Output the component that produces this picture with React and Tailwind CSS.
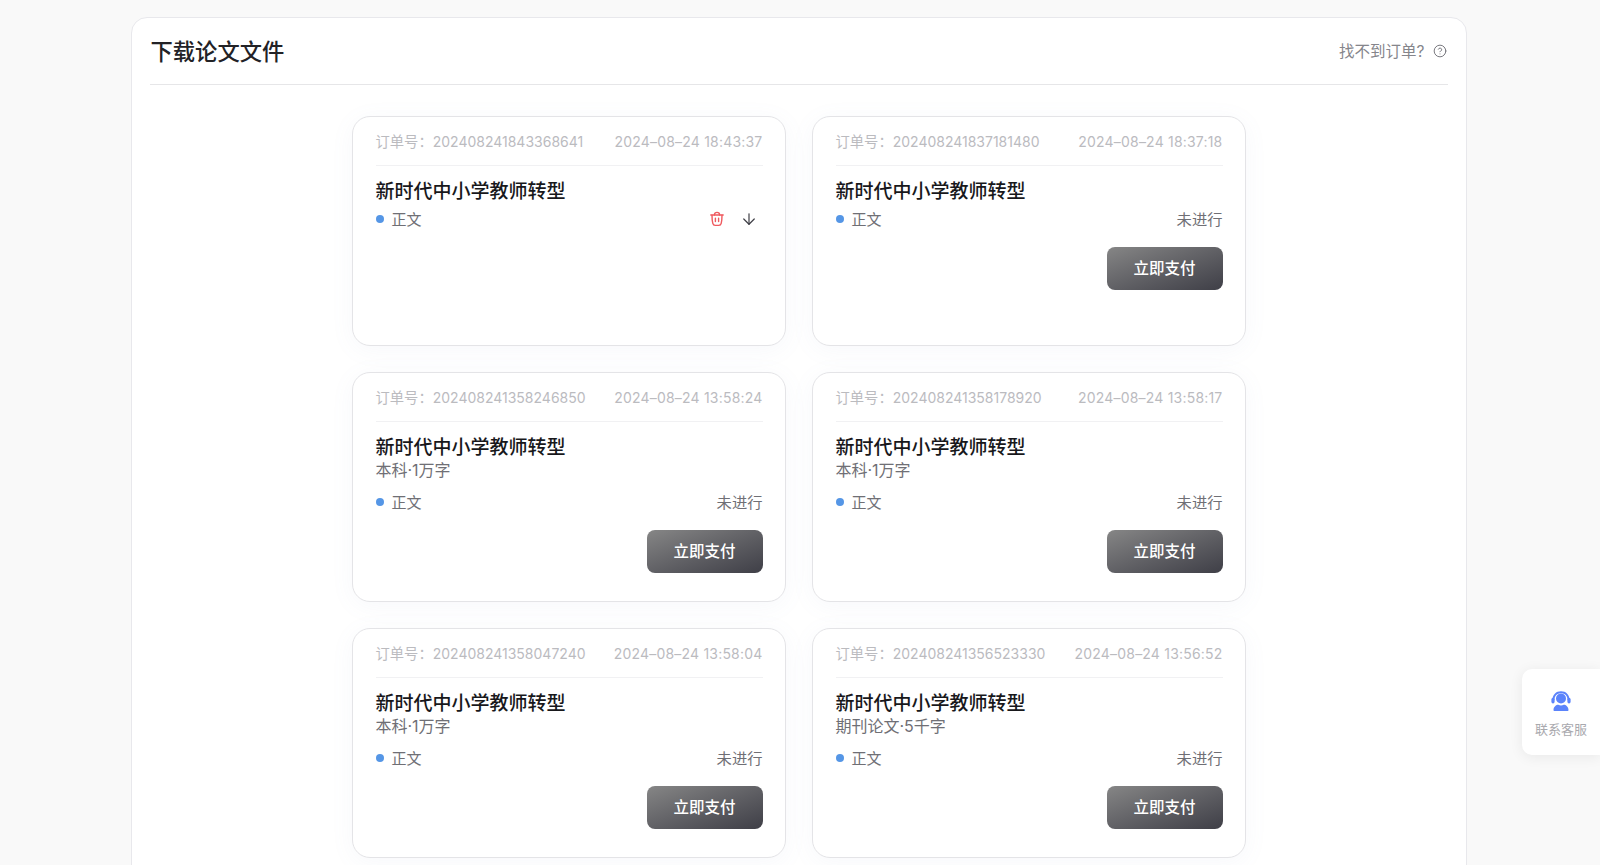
import { ArrowDown, CircleHelp } from 'lucide-react';

const FONT = 'font-["Inter","Noto_Sans_CJK_SC",sans-serif]';

const ORDERS = [
  { no: '202408241843368641', time: '2024–08–24 18:43:37', done: true },
  { no: '202408241837181480', time: '2024–08–24 18:37:18' },
  { no: '202408241358246850', time: '2024–08–24 13:58:24', meta: '本科·1万字' },
  { no: '202408241358178920', time: '2024–08–24 13:58:17', meta: '本科·1万字' },
  { no: '202408241358047240', time: '2024–08–24 13:58:04', meta: '本科·1万字' },
  { no: '202408241356523330', time: '2024–08–24 13:56:52', meta: '期刊论文·5千字' },
];

function TrashIcon() {
  return (
    <svg width="16" height="16" viewBox="0 0 16 16" fill="none" stroke="#ef5a5f" strokeWidth="1.4" strokeLinecap="round" strokeLinejoin="round">
      <path d="M1.8 4h12.4" />
      <path d="M5.4 4c0-1.6 1-2.6 2.6-2.6s2.6 1 2.6 2.6" />
      <path d="M3 4.2c0 3 .2 6 .8 8.2.3 1.2 1.2 2 2.4 2h3.6c1.2 0 2.1-.8 2.4-2 .6-2.2.8-5.2.8-8.2" />
      <path d="M6.4 7.2v3.4M9.6 7.2v3.4" />
    </svg>
  );
}

function HeadsetIcon() {
  return (
    <svg width="24" height="24" viewBox="0 0 24 24" fill="#5b83fb">
      <circle cx="12" cy="9.5" r="5" />
      <path d="M3.4 11.2C3.4 5.6 7 2.2 12 2.2s8.600 3.400 8.600 9h-2C18.600 6.800 15.800 4.200 12 4.200S5.400 6.800 5.400 11.200z" />
      <rect x="2.400" y="8.800" width="3.200" height="5.600" rx="1.600" />
      <rect x="18.400" y="8.800" width="3.200" height="5.600" rx="1.600" />
      <path d="M4.500 21c0-3.200 2.600-5.200 4.800-5.200 1.600 1 3.800 1 5.400 0 2.200 0 4.800 2 4.800 5.200 0 .6-.4 1-1 1h-13c-.6 0-1-.4-1-1z" />
    </svg>
  );
}

function OrderCard({ order }) {
  return (
    <div className="flex h-[230px] flex-col rounded-[18px] border border-[#e4e4e7] bg-white pr-[22px] pl-[23px] shadow-[0_4px_24px_rgba(120,130,180,0.06)]">
      <div className="flex h-[49px] shrink-0 items-center justify-between border-b border-[#f1f1f3] pt-px text-[14px] text-[#bbbbbf]">
        <span>
          <span className="text-[14.300px]">订单号：</span>
          {order.no}
        </span>
        <span className="tracking-[0.2px]">{order.time}</span>
      </div>
      <div className="mt-[12px] text-[19px] leading-[28px] font-medium text-[#18181b]">新时代中小学教师转型</div>
      {order.meta && <div className="text-[16px] leading-[16px] text-[#6f6f75]">{order.meta}</div>}
      <div className={`flex h-[24px] items-center justify-between text-[15px] text-[#6f6f75] ${order.meta ? 'mt-[13px]' : 'mt-[2px]'}`}>
        <span className="flex items-center gap-[8px]">
          <span className="-mt-[2px] h-[8px] w-[8px] rounded-full bg-[#5596e6]" />
          正文
        </span>
        {order.done ? (
          <span className="-mt-[2px] flex items-center gap-[15px] pr-[5px]">
            <TrashIcon />
            <ArrowDown size={18} strokeWidth={1.6} className="text-[#3f3f46]" />
          </span>
        ) : (
          <span className="text-[15.300px]">未进行</span>
        )}
      </div>
      {!order.done && (
        <div className="mt-[15px] flex justify-end">
          <button
            type="button"
            className="h-[43px] w-[116px] rounded-[8px] bg-gradient-to-br from-[#868686] to-[#3f3f47] text-[15.500px] font-medium text-white"
          >
            立即支付
          </button>
        </div>
      )}
    </div>
  );
}

export default function App() {
  return (
    <div className={`relative h-[865px] overflow-hidden bg-[#f9f9f9] pt-[17px] pr-[3px] ${FONT}`}>
      <div className="mx-auto w-[1336px] rounded-[16px] border border-[#e8e8ec] bg-white px-[18px] pb-[40px]">
        <div className="flex h-[67px] items-center justify-between border-b border-[#e6e6e8]">
          <h1 className="pt-px pl-px text-[22.300px] font-medium text-[#222226]">下载论文文件</h1>
          <div className="flex items-center gap-[8px] pt-[2px] text-[15.500px] text-[#85858b]">
            找不到订单?
            <CircleHelp size={14} strokeWidth={1.6} className="-mt-[2px] mr-px text-[#6f6f75]" />
          </div>
        </div>
        <div className="mx-auto mt-[31px] grid w-[894px] grid-cols-2 gap-[26px]">
          {ORDERS.map((order) => (
            <OrderCard key={order.no} order={order} />
          ))}
        </div>
      </div>

      <div className="absolute top-[669px] right-0 flex h-[86px] w-[78px] flex-col items-center rounded-l-[10px] bg-white pt-[20px] shadow-[0_2px_14px_rgba(0,0,0,0.07)]">
        <HeadsetIcon />
        <span className="mt-[7px] text-[13px] text-[#a9a9ae]">联系客服</span>
      </div>
    </div>
  );
}
